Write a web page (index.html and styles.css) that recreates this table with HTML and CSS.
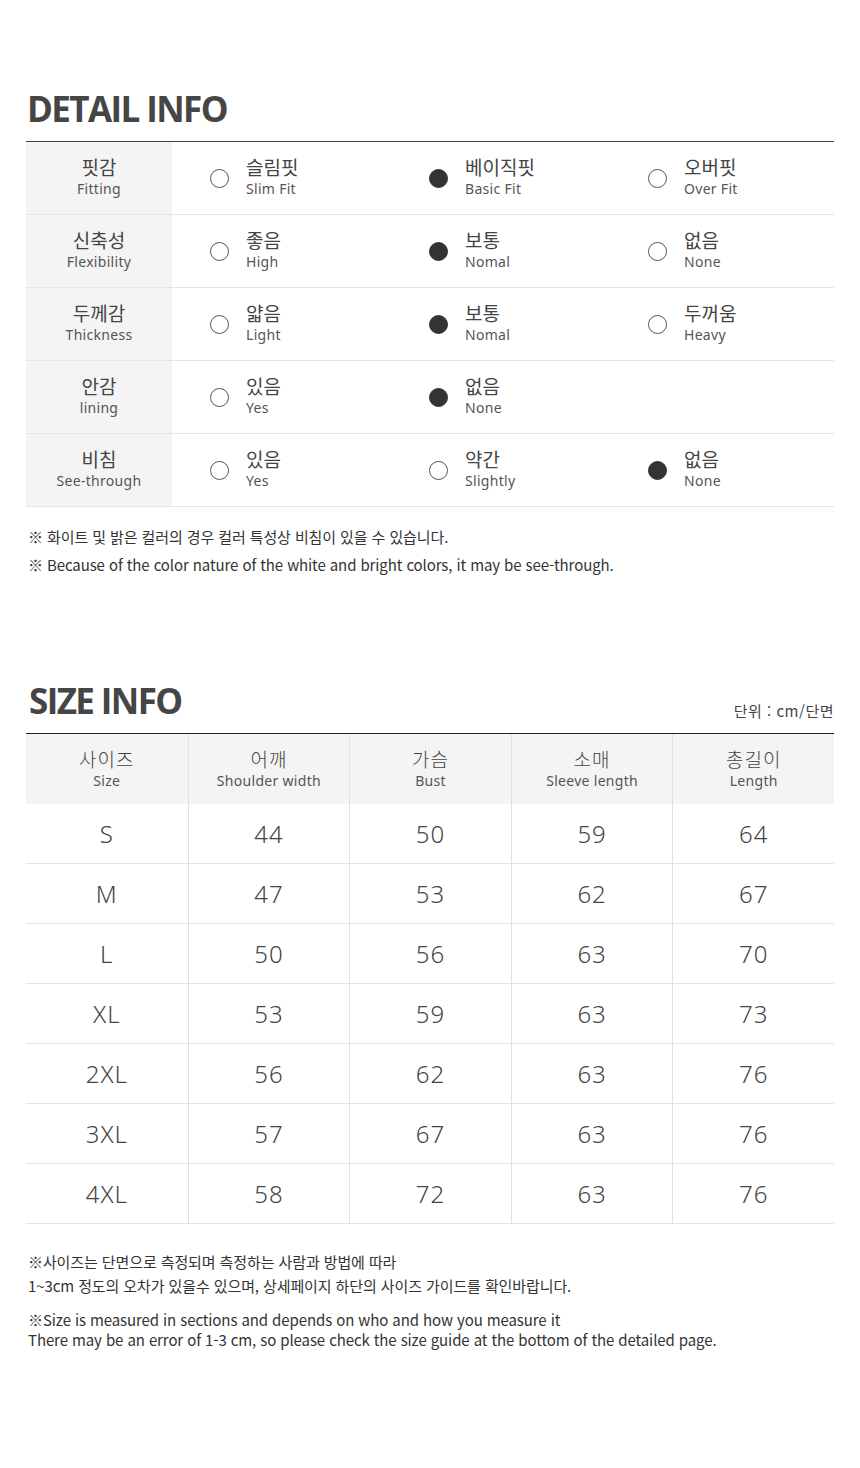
FILE: index.html
```html
<!DOCTYPE html>
<html lang="ko">
<head>
<meta charset="utf-8">
<title>Detail / Size Info</title>
<link rel="stylesheet" href="styles.css">
</head>
<body>
<div class="page">
  <section class="detail">
    <h2 class="title">DETAIL INFO</h2>
    <div class="dtable">
      <div class="drow">
        <div class="dlabel"><span class="ko">핏감</span><span class="en">Fitting</span></div>
        <div class="opt"><span class="dot"></span><div class="otext"><span class="ko">슬림핏</span><span class="en">Slim Fit</span></div></div>
        <div class="opt"><span class="dot on"></span><div class="otext"><span class="ko">베이직핏</span><span class="en">Basic Fit</span></div></div>
        <div class="opt"><span class="dot"></span><div class="otext"><span class="ko">오버핏</span><span class="en">Over Fit</span></div></div>
      </div>
      <div class="drow">
        <div class="dlabel"><span class="ko">신축성</span><span class="en">Flexibility</span></div>
        <div class="opt"><span class="dot"></span><div class="otext"><span class="ko">좋음</span><span class="en">High</span></div></div>
        <div class="opt"><span class="dot on"></span><div class="otext"><span class="ko">보통</span><span class="en">Nomal</span></div></div>
        <div class="opt"><span class="dot"></span><div class="otext"><span class="ko">없음</span><span class="en">None</span></div></div>
      </div>
      <div class="drow">
        <div class="dlabel"><span class="ko">두께감</span><span class="en">Thickness</span></div>
        <div class="opt"><span class="dot"></span><div class="otext"><span class="ko">얇음</span><span class="en">Light</span></div></div>
        <div class="opt"><span class="dot on"></span><div class="otext"><span class="ko">보통</span><span class="en">Nomal</span></div></div>
        <div class="opt"><span class="dot"></span><div class="otext"><span class="ko">두꺼움</span><span class="en">Heavy</span></div></div>
      </div>
      <div class="drow">
        <div class="dlabel"><span class="ko">안감</span><span class="en">lining</span></div>
        <div class="opt"><span class="dot"></span><div class="otext"><span class="ko">있음</span><span class="en">Yes</span></div></div>
        <div class="opt"><span class="dot on"></span><div class="otext"><span class="ko">없음</span><span class="en">None</span></div></div>
        <div class="opt"></div>
      </div>
      <div class="drow">
        <div class="dlabel"><span class="ko">비침</span><span class="en">See-through</span></div>
        <div class="opt"><span class="dot"></span><div class="otext"><span class="ko">있음</span><span class="en">Yes</span></div></div>
        <div class="opt"><span class="dot"></span><div class="otext"><span class="ko">약간</span><span class="en">Slightly</span></div></div>
        <div class="opt"><span class="dot on"></span><div class="otext"><span class="ko">없음</span><span class="en">None</span></div></div>
      </div>
    </div>
    <div class="notes notes-detail">
      <p>※ 화이트 및 밝은 컬러의 경우 컬러 특성상 비침이 있을 수 있습니다.</p>
      <p>※ Because of the color nature of the white and bright colors, it may be see-through.</p>
    </div>
  </section>

  <section class="size">
    <div class="size-head">
      <h2 class="title">SIZE INFO</h2>
      <span class="unit">단위 : cm/단면</span>
    </div>
    <div class="stable">
      <div class="srow shead">
        <div class="scell"><span class="ko">사이즈</span><span class="en">Size</span></div>
        <div class="scell"><span class="ko">어깨</span><span class="en">Shoulder width</span></div>
        <div class="scell"><span class="ko">가슴</span><span class="en">Bust</span></div>
        <div class="scell"><span class="ko">소매</span><span class="en">Sleeve length</span></div>
        <div class="scell"><span class="ko">총길이</span><span class="en">Length</span></div>
      </div>
      <div class="srow"><div class="scell">S</div><div class="scell">44</div><div class="scell">50</div><div class="scell">59</div><div class="scell">64</div></div>
      <div class="srow"><div class="scell">M</div><div class="scell">47</div><div class="scell">53</div><div class="scell">62</div><div class="scell">67</div></div>
      <div class="srow"><div class="scell">L</div><div class="scell">50</div><div class="scell">56</div><div class="scell">63</div><div class="scell">70</div></div>
      <div class="srow"><div class="scell">XL</div><div class="scell">53</div><div class="scell">59</div><div class="scell">63</div><div class="scell">73</div></div>
      <div class="srow"><div class="scell">2XL</div><div class="scell">56</div><div class="scell">62</div><div class="scell">63</div><div class="scell">76</div></div>
      <div class="srow"><div class="scell">3XL</div><div class="scell">57</div><div class="scell">67</div><div class="scell">63</div><div class="scell">76</div></div>
      <div class="srow"><div class="scell">4XL</div><div class="scell">58</div><div class="scell">72</div><div class="scell">63</div><div class="scell">76</div></div>
    </div>
    <div class="notes notes-size">
      <p class="ko-note">※사이즈는 단면으로 측정되며 측정하는 사람과 방법에 따라<br>1~3cm 정도의 오차가 있을수 있으며, 상세페이지 하단의 사이즈 가이드를 확인바랍니다.</p>
      <p class="en-note">※Size is measured in sections and depends on who and how you measure it<br>There may be an error of 1-3 cm, so please check the size guide at the bottom of the detailed page.</p>
    </div>
  </section>
</div>
</body>
</html>
```

FILE: styles.css
```css
* { box-sizing: border-box; }
html, body { margin: 0; padding: 0; background: #fff; }
body {
  font-family: "Noto Sans", "Noto Sans CJK KR", sans-serif;
  color: #444;
}
.page {
  width: 860px;
  padding: 0 26px;
}
.title {
  margin: 0;
  font-family: "Open Sans", "Noto Sans", sans-serif;
  font-weight: 700;
  font-size: 35px;
  letter-spacing: -1.6px;
  color: #454545;
  line-height: 40px;
}
.detail { padding-top: 89px; }
.detail .title { padding-left: 1px; margin-bottom: 12px; }

.dtable { border-top: 1px solid #444; }
.drow {
  display: grid;
  grid-template-columns: 146px 219px 219px 1fr;
  height: 73px;
  border-bottom: 1px solid #e5e5e5;
}
.dlabel {
  background: #f4f4f4;
  display: flex;
  flex-direction: column;
  align-items: center;
  justify-content: center;
}
.ko {
  font-family: "Noto Sans CJK KR", sans-serif;
  font-size: 19px;
  line-height: 24px;
  color: #444;
}
.en {
  font-family: "Noto Sans", "Noto Sans CJK KR", sans-serif;
  font-size: 14px;
  line-height: 20px;
  color: #555;
  letter-spacing: 0.3px;
}
.dlabel .ko { margin-top: -2px; }
.opt {
  display: flex;
  align-items: center;
  padding-left: 38px;
}
.dot {
  width: 19px;
  height: 19px;
  border: 1px solid #555;
  border-radius: 50%;
  flex: none;
  margin-right: 17px;
}
.dot.on { background: #333; border-color: #333; }
.otext { display: flex; flex-direction: column; }
.otext .ko { margin-top: -2px; }

.notes p {
  margin: 0;
  font-family: "Noto Sans CJK KR", sans-serif;
  font-size: 15px;
  color: #333;
  letter-spacing: -0.1px;
}
.notes-detail { padding-top: 16px; padding-left: 2px; }
.notes-detail p { line-height: 28px; }

.size { padding-top: 102px; }
.size-head {
  display: flex;
  justify-content: space-between;
  align-items: flex-end;
  padding-left: 3px;
  margin-bottom: 12px;
}
.size-head .title { line-height: 40px; }
.unit {
  font-family: "Noto Sans CJK KR", sans-serif;
  font-size: 15px;
  letter-spacing: 0.5px;
  color: #444;
  line-height: 20px;
  padding-bottom: 0;
}
.stable { border-top: 1px solid #222; }
.srow {
  display: grid;
  grid-template-columns: repeat(5, 1fr);
  height: 60px;
  border-bottom: 1px solid #e5e5e5;
}
.srow.shead { height: 70px; background: #f4f4f4; border-bottom: none; }
.scell {
  display: flex;
  flex-direction: column;
  align-items: center;
  justify-content: center;
  border-left: 1px solid #e0e0e0;
  font-family: "Noto Sans", sans-serif;
  font-weight: 300;
  font-size: 24px;
  letter-spacing: 1px;
  color: #444;
}
.scell:first-child { border-left: none; }
.shead .scell .ko { font-size: 19px; line-height: 24px; }
.shead .scell .en { font-size: 14px; line-height: 20px; font-weight: 400; }

.notes-size { padding-top: 26px; padding-left: 2px; }
.notes-size .ko-note { line-height: 24px; margin-bottom: 12px; }
.notes-size .en-note { line-height: 20px; }
```
